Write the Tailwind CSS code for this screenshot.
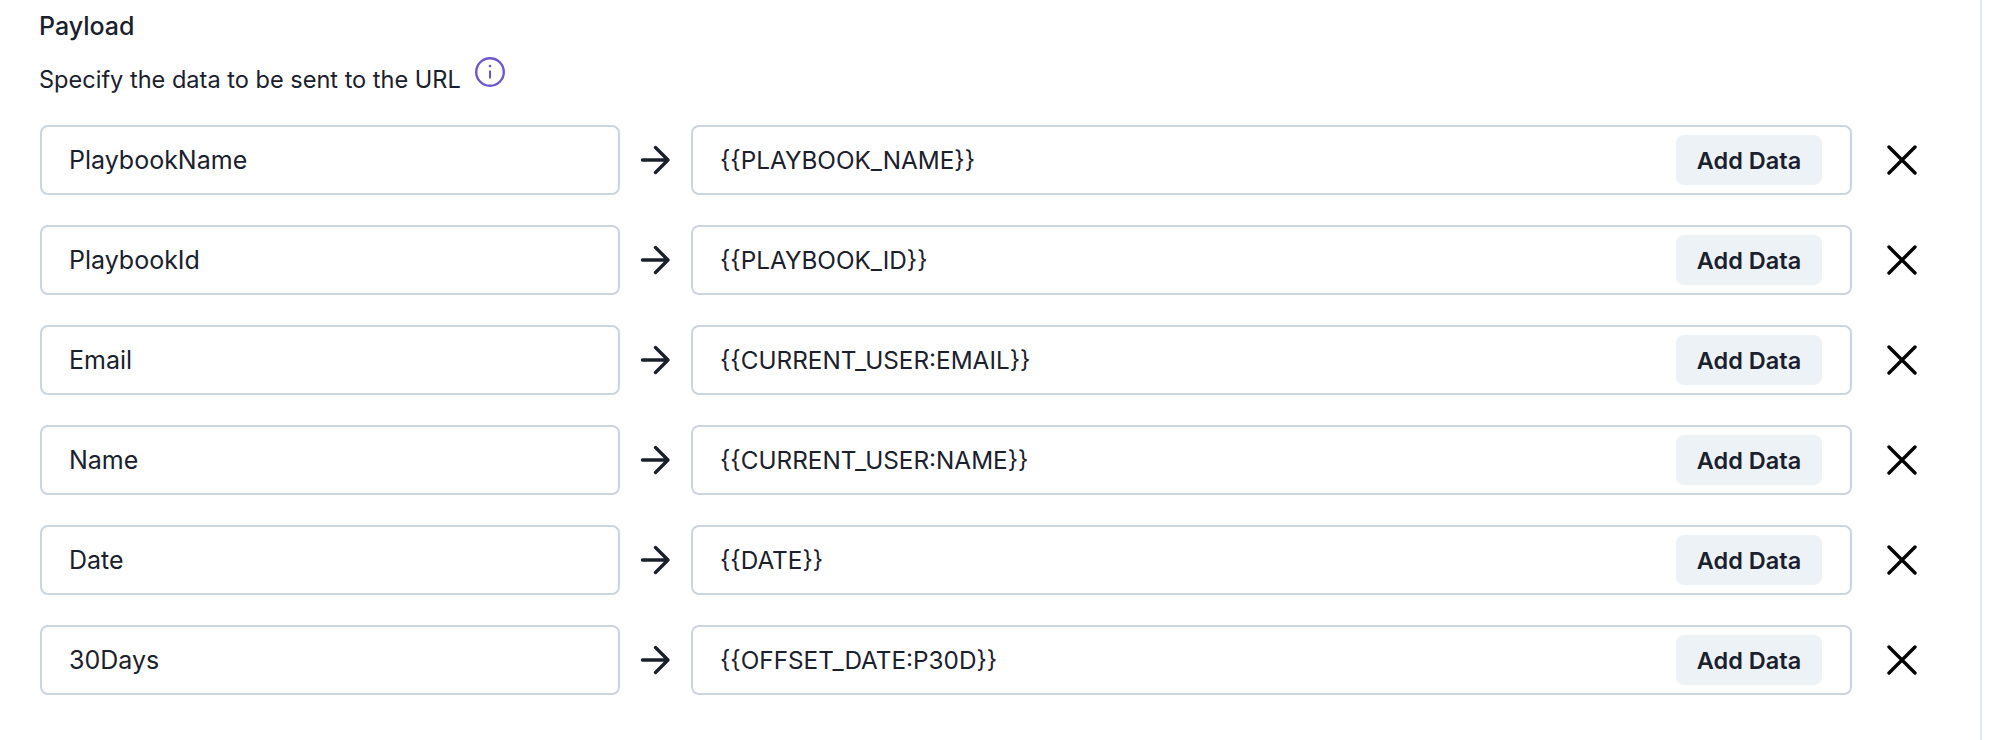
<!DOCTYPE html>
<html>
<head>
<meta charset="utf-8">
<script src="https://cdn.jsdelivr.net/npm/@tailwindcss/browser@4"></script>
</head>
<body class="bg-white">
<div class="w-[2000px] h-[740px] overflow-hidden font-['Inter',sans-serif] text-[#1a202c]">
  <div class="w-[1982px] h-[740px] border-r-2 border-[#e2e8f0] pl-10 pt-[10px]">
    <div class="text-[25px] leading-[32px] font-medium -ml-px">Payload</div>
    <div class="flex items-start mt-5 h-[44px] text-[23.55px] leading-[36px] -ml-px">
      <span>Specify the data to be sent to the URL</span>
      <svg class="ml-[14px] mt-[-5px]" width="30" height="30" viewBox="0 0 30 30" fill="none" stroke="#6f56d0" stroke-width="2.4"><circle cx="15" cy="15" r="13.8"/><path d="M15 13.5v8" stroke-width="2"/><circle cx="15" cy="9" r="1.3" fill="#6f56d0" stroke="none"/></svg>
    </div>
    <div class="flex flex-col gap-[30px] mt-[19px]">
      <div class="flex items-center h-[70px]">
        <div class="w-[580px] h-[70px] flex items-center border-2 border-[#cbd5e0] rounded-lg pl-[27px] pt-[2px] text-[25px]">PlaybookName</div>
        <svg class="ml-[19px] mr-[20px]" width="32" height="30" viewBox="0 0 32 30" fill="none" stroke="#1a202c" stroke-width="3.4" stroke-linecap="round" stroke-linejoin="round"><path d="M3.5 15H29M16.5 2.5L29 15 16.5 27.5"/></svg>
        <div class="w-[1161px] h-[70px] flex items-center justify-between border-2 border-[#cbd5e0] rounded-lg pl-[27px] pr-[28px] text-[24.3px]"><span class="pt-[1px]">{{PLAYBOOK_NAME}}</span><span class="w-[146px] h-[50px] flex items-center justify-center rounded-lg bg-[#edf2f7] pt-[1px] font-semibold text-[23.5px]">Add Data</span></div>
        <svg class="ml-[35px]" width="30" height="30" viewBox="0 0 30 30" fill="none" stroke="#000" stroke-width="3.4" stroke-linecap="round"><path d="M2 2l26 26M28 2L2 28"/></svg>
      </div>
      <div class="flex items-center h-[70px]">
        <div class="w-[580px] h-[70px] flex items-center border-2 border-[#cbd5e0] rounded-lg pl-[27px] pt-[2px] text-[25px]">PlaybookId</div>
        <svg class="ml-[19px] mr-[20px]" width="32" height="30" viewBox="0 0 32 30" fill="none" stroke="#1a202c" stroke-width="3.4" stroke-linecap="round" stroke-linejoin="round"><path d="M3.5 15H29M16.5 2.5L29 15 16.5 27.5"/></svg>
        <div class="w-[1161px] h-[70px] flex items-center justify-between border-2 border-[#cbd5e0] rounded-lg pl-[27px] pr-[28px] text-[24.3px]"><span class="pt-[1px]">{{PLAYBOOK_ID}}</span><span class="w-[146px] h-[50px] flex items-center justify-center rounded-lg bg-[#edf2f7] pt-[1px] font-semibold text-[23.5px]">Add Data</span></div>
        <svg class="ml-[35px]" width="30" height="30" viewBox="0 0 30 30" fill="none" stroke="#000" stroke-width="3.4" stroke-linecap="round"><path d="M2 2l26 26M28 2L2 28"/></svg>
      </div>
      <div class="flex items-center h-[70px]">
        <div class="w-[580px] h-[70px] flex items-center border-2 border-[#cbd5e0] rounded-lg pl-[27px] pt-[2px] text-[25px]">Email</div>
        <svg class="ml-[19px] mr-[20px]" width="32" height="30" viewBox="0 0 32 30" fill="none" stroke="#1a202c" stroke-width="3.4" stroke-linecap="round" stroke-linejoin="round"><path d="M3.5 15H29M16.5 2.5L29 15 16.5 27.5"/></svg>
        <div class="w-[1161px] h-[70px] flex items-center justify-between border-2 border-[#cbd5e0] rounded-lg pl-[27px] pr-[28px] text-[24.3px]"><span class="pt-[1px]">{{CURRENT_USER:EMAIL}}</span><span class="w-[146px] h-[50px] flex items-center justify-center rounded-lg bg-[#edf2f7] pt-[1px] font-semibold text-[23.5px]">Add Data</span></div>
        <svg class="ml-[35px]" width="30" height="30" viewBox="0 0 30 30" fill="none" stroke="#000" stroke-width="3.4" stroke-linecap="round"><path d="M2 2l26 26M28 2L2 28"/></svg>
      </div>
      <div class="flex items-center h-[70px]">
        <div class="w-[580px] h-[70px] flex items-center border-2 border-[#cbd5e0] rounded-lg pl-[27px] pt-[2px] text-[25px]">Name</div>
        <svg class="ml-[19px] mr-[20px]" width="32" height="30" viewBox="0 0 32 30" fill="none" stroke="#1a202c" stroke-width="3.4" stroke-linecap="round" stroke-linejoin="round"><path d="M3.5 15H29M16.5 2.5L29 15 16.5 27.5"/></svg>
        <div class="w-[1161px] h-[70px] flex items-center justify-between border-2 border-[#cbd5e0] rounded-lg pl-[27px] pr-[28px] text-[24.3px]"><span class="pt-[1px]">{{CURRENT_USER:NAME}}</span><span class="w-[146px] h-[50px] flex items-center justify-center rounded-lg bg-[#edf2f7] pt-[1px] font-semibold text-[23.5px]">Add Data</span></div>
        <svg class="ml-[35px]" width="30" height="30" viewBox="0 0 30 30" fill="none" stroke="#000" stroke-width="3.4" stroke-linecap="round"><path d="M2 2l26 26M28 2L2 28"/></svg>
      </div>
      <div class="flex items-center h-[70px]">
        <div class="w-[580px] h-[70px] flex items-center border-2 border-[#cbd5e0] rounded-lg pl-[27px] pt-[2px] text-[25px]">Date</div>
        <svg class="ml-[19px] mr-[20px]" width="32" height="30" viewBox="0 0 32 30" fill="none" stroke="#1a202c" stroke-width="3.4" stroke-linecap="round" stroke-linejoin="round"><path d="M3.5 15H29M16.5 2.5L29 15 16.5 27.5"/></svg>
        <div class="w-[1161px] h-[70px] flex items-center justify-between border-2 border-[#cbd5e0] rounded-lg pl-[27px] pr-[28px] text-[24.3px]"><span class="pt-[1px]">{{DATE}}</span><span class="w-[146px] h-[50px] flex items-center justify-center rounded-lg bg-[#edf2f7] pt-[1px] font-semibold text-[23.5px]">Add Data</span></div>
        <svg class="ml-[35px]" width="30" height="30" viewBox="0 0 30 30" fill="none" stroke="#000" stroke-width="3.4" stroke-linecap="round"><path d="M2 2l26 26M28 2L2 28"/></svg>
      </div>
      <div class="flex items-center h-[70px]">
        <div class="w-[580px] h-[70px] flex items-center border-2 border-[#cbd5e0] rounded-lg pl-[27px] pt-[2px] text-[25px]">30Days</div>
        <svg class="ml-[19px] mr-[20px]" width="32" height="30" viewBox="0 0 32 30" fill="none" stroke="#1a202c" stroke-width="3.4" stroke-linecap="round" stroke-linejoin="round"><path d="M3.5 15H29M16.5 2.5L29 15 16.5 27.5"/></svg>
        <div class="w-[1161px] h-[70px] flex items-center justify-between border-2 border-[#cbd5e0] rounded-lg pl-[27px] pr-[28px] text-[24.3px]"><span class="pt-[1px]">{{OFFSET_DATE:P30D}}</span><span class="w-[146px] h-[50px] flex items-center justify-center rounded-lg bg-[#edf2f7] pt-[1px] font-semibold text-[23.5px]">Add Data</span></div>
        <svg class="ml-[35px]" width="30" height="30" viewBox="0 0 30 30" fill="none" stroke="#000" stroke-width="3.4" stroke-linecap="round"><path d="M2 2l26 26M28 2L2 28"/></svg>
      </div>
    </div>
  </div>
</div>
</body>
</html>
